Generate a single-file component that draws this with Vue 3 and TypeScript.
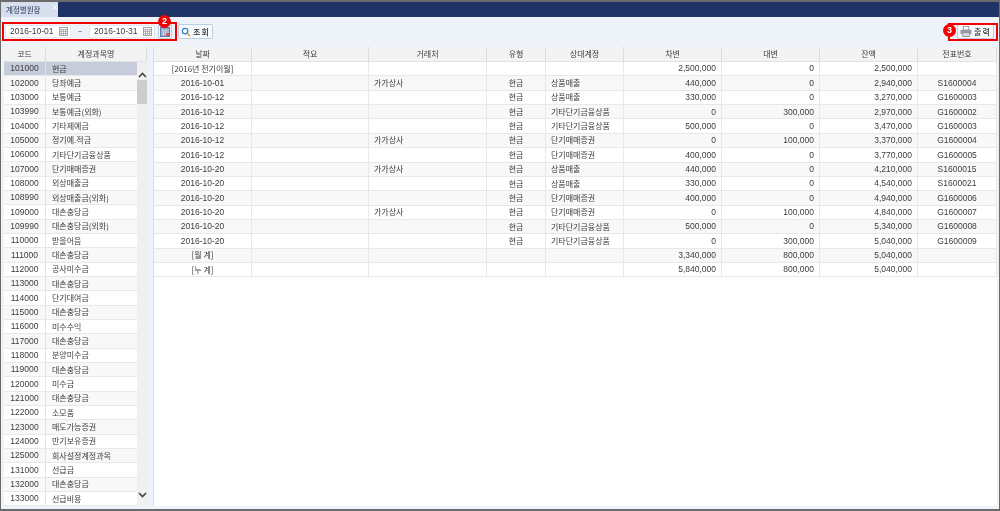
<script setup lang="ts">
const accounts: [string, string][] = [
  ['101000','현금'],['102000','당좌예금'],['103000','보통예금'],['103990','보통예금(외화)'],['104000','기타제예금'],
  ['105000','정기예.적금'],['106000','기타단기금융상품'],['107000','단기매매증권'],['108000','외상매출금'],['108990','외상매출금(외화)'],
  ['109000','대손충당금'],['109990','대손충당금(외화)'],['110000','받을어음'],['111000','대손충당금'],['112000','공사미수금'],
  ['113000','대손충당금'],['114000','단기대여금'],['115000','대손충당금'],['116000','미수수익'],['117000','대손충당금'],
  ['118000','분양미수금'],['119000','대손충당금'],['120000','미수금'],['121000','대손충당금'],['122000','소모품'],
  ['123000','매도가능증권'],['124000','만기보유증권'],['125000','회사설정계정과목'],['131000','선급금'],['132000','대손충당금'],['133000','선급비용'],
]
const heads = ['날짜','적요','거래처','유형','상대계정','차변','대변','잔액','전표번호']
const rows: string[][] = [
  ['[2016년 전기이월]','','','','','2,500,000','0','2,500,000',''],
  ['2016-10-01','','가가상사','현금','상품매출','440,000','0','2,940,000','S1600004'],
  ['2016-10-12','','','현금','상품매출','330,000','0','3,270,000','G1600003'],
  ['2016-10-12','','','현금','기타단기금융상품','0','300,000','2,970,000','G1600002'],
  ['2016-10-12','','','현금','기타단기금융상품','500,000','0','3,470,000','G1600003'],
  ['2016-10-12','','가가상사','현금','단기매매증권','0','100,000','3,370,000','G1600004'],
  ['2016-10-12','','','현금','단기매매증권','400,000','0','3,770,000','G1600005'],
  ['2016-10-20','','가가상사','현금','상품매출','440,000','0','4,210,000','S1600015'],
  ['2016-10-20','','','현금','상품매출','330,000','0','4,540,000','S1600021'],
  ['2016-10-20','','','현금','단기매매증권','400,000','0','4,940,000','G1600006'],
  ['2016-10-20','','가가상사','현금','단기매매증권','0','100,000','4,840,000','G1600007'],
  ['2016-10-20','','','현금','기타단기금융상품','500,000','0','5,340,000','G1600008'],
  ['2016-10-20','','','현금','기타단기금융상품','0','300,000','5,040,000','G1600009'],
  ['[월 계]','','','','','3,340,000','800,000','5,040,000',''],
  ['[누 계]','','','','','5,840,000','800,000','5,040,000',''],
]
const align = ['c','l','l','c','l','r','r','r','c']
const isNum = (s: string): boolean => /^[A-Z]?[\d,-]+$/.test(s)
</script>

<template>
  <div class="app">
    <div class="tabbar">
      <div class="tab"><span>계정별원장</span><i>×</i></div>
    </div>
    <div class="toolbar">
      <div class="date-group">
        <div class="input"><span>2016-10-01</span>
          <svg class="cal" viewBox="0 0 9 9"><rect x=".5" y=".5" width="8" height="8" fill="#fff" stroke="#a3a3a3"/><path d="M0 2.5h9M0 4.5h9M0 6.5h9M2.5 2v7M4.5 2v7M6.5 2v7" stroke="#a3a3a3" stroke-width=".8"/></svg>
        </div>
        <span class="tilde">~</span>
        <div class="input"><span>2016-10-31</span>
          <svg class="cal" viewBox="0 0 9 9"><rect x=".5" y=".5" width="8" height="8" fill="#fff" stroke="#a3a3a3"/><path d="M0 2.5h9M0 4.5h9M0 6.5h9M2.5 2v7M4.5 2v7M6.5 2v7" stroke="#a3a3a3" stroke-width=".8"/></svg>
        </div>
        <button class="btn cal-btn">
          <svg width="10" height="10" viewBox="0 0 10 10"><rect x=".5" y=".5" width="9" height="9" fill="#8fa4c8" stroke="#5c76a8"/><path d="M1 3h8M1 5h8M1 7h8M3.5 3v6M6 3v6" stroke="#dfe6f2" stroke-width=".6"/><rect x="6" y="6" width="3" height="3" fill="#d0605a"/></svg>
        </button>
      </div>
      <button class="btn search">
        <svg width="10" height="10" viewBox="0 0 11 11"><circle cx="4.5" cy="4.5" r="3" fill="#fff" stroke="#2f86c8" stroke-width="1.4"/><path d="M6.8 6.8L10 10" stroke="#c9963c" stroke-width="1.6"/></svg>
        <span>조 회</span>
      </button>
      <div class="spacer"></div>
      <button class="btn print">
        <svg width="12" height="11" viewBox="0 0 13 12"><rect x="3.5" y=".5" width="6" height="4" fill="#fff" stroke="#9a9a9a"/><rect x=".5" y="4" width="12" height="5" rx="1" fill="#9a9aa6"/><rect x="3" y="7.5" width="7" height="4" fill="#fff" stroke="#8a8a9a"/><path d="M4 9h5M4 10.5h5" stroke="#b99ac4" stroke-width=".6"/></svg>
        <span>출 력</span>
      </button>
    </div>
    <div class="content">
      <section class="left">
        <div class="lhead"><div>코드</div><div>계정과목명</div></div>
        <div class="lbody">
          <div class="lrows">
            <div v-for="(a, i) in accounts" :key="a[0]" class="lrow" :class="{ sel: i === 0, alt: i % 2 === 1 }">
              <div class="code">{{ a[0] }}</div><div class="name">{{ a[1] }}</div>
            </div>
          </div>
          <div class="scroll">
            <svg class="arrow" viewBox="0 0 9 6"><path d="M1 5l3.5-3.5L8 5" fill="none" stroke="#444" stroke-width="1.6"/></svg>
            <div class="thumb"></div>
            <div class="grow"></div>
            <svg class="arrow" viewBox="0 0 9 6"><path d="M1 1l3.5 3.5L8 1" fill="none" stroke="#444" stroke-width="1.6"/></svg>
          </div>
        </div>
      </section>
      <section class="right">
        <div class="rrow rhead"><div v-for="h in heads" :key="h">{{ h }}</div></div>
        <div v-for="(r, i) in rows" :key="i" class="rrow" :class="{ alt: i % 2 === 1 }">
          <div v-for="(c, j) in r" :key="j" :class="[align[j], { num: isNum(c) }]">{{ c }}</div>
        </div>
      </section>
    </div>

    <div class="mark m1"></div>
    <div class="mark m2"></div>
    <div class="badge b2">2</div>
    <div class="badge b3">3</div>
  </div>
</template>

<style>
html, body { margin: 0; background: #fff; }
</style>

<style scoped>
.app {
  position: relative; width: 1000px; height: 511px; box-sizing: border-box; overflow: hidden;
  display: flex; flex-direction: column; background: #eef2f9;
  border: 2px solid #6b6b6b; border-width: 2px 1px 2px 1px;
  font-family: "Noto Sans CJK KR", "Liberation Sans", sans-serif; font-size: 8px; color: #3c3c3c; line-height: 1;
  filter: blur(.3px);
}
.tabbar { height: 15px; background: #1f3367; display: flex; flex: none; }
.tab { width: 57px; background: #d6dfee; color: #44536e; display: flex; align-items: center; padding-left: 5px; box-sizing: border-box; position: relative; font-size: 7.5px; font-weight: 500; }
.tab i { position: absolute; left: 50px; top: 1px; font-style: normal; font-size: 8px; color: #fff; }
.toolbar { height: 29px; flex: none; display: flex; align-items: center; padding: 0 5px 0 4px; box-sizing: border-box; }
.date-group { display: flex; align-items: center; }
.input { width: 66px; height: 13px; background: #fff; border: 1px solid #e3e6ec; box-sizing: border-box; display: flex; align-items: center; justify-content: space-between; padding: 0 2px 0 4px; font-family: "Liberation Sans Narrow", "Liberation Sans", sans-serif; font-size: 8.5px; }
.cal { width: 9px; height: 9px; }
.tilde { width: 18px; text-align: center; font-family: "Liberation Sans", sans-serif; font-size: 7px; }
.btn { background: #f7fafd; border: 1px solid #b9cfe4; border-radius: 2px; height: 15px; box-sizing: border-box; padding: 0; display: flex; align-items: center; gap: 2px; font: inherit; font-weight: 500; color: #333; letter-spacing: -.3px; }
.cal-btn { width: 14px; margin-left: 3px; justify-content: center; }
.search { width: 35px; margin-left: 6px; padding-left: 2px; }
.print { width: 37px; padding-left: 2px; gap: 2px; }
.spacer { flex: 1; }
.content { flex: 1; min-height: 0; display: flex; padding: 1px 2px 3px 3px; gap: 6px; }
.left { width: 143px; flex: none; display: flex; flex-direction: column; background: #fff; overflow: hidden; }
.lhead { display: flex; height: 15px; flex: none; background: #f3f3f3; border-bottom: 1px solid #e2e2e2; box-sizing: border-box; }
.lhead > div { display: flex; align-items: center; justify-content: center; border-right: 1px solid #dcdcdc; box-sizing: border-box; }
.lhead > div:first-child { width: 42px; }
.lhead > div:last-child { flex: 1; }
.lbody { flex: 1; min-height: 0; display: flex; }
.lrows { flex: 1; min-width: 0; overflow: hidden; }
.lrow { display: flex; height: 14.33px; align-items: center; border-bottom: 1px solid #e8e8e8; box-sizing: border-box; }
.lrow.alt { background: #f8f8f8; }
.lrow.sel { background: #c6ccd9; }
.code { width: 42px; flex: none; text-align: center; height: 100%; display: flex; align-items: center; justify-content: center; border-right: 1px solid #e4e4e4; box-sizing: border-box; font-family: "Liberation Sans Narrow", "Liberation Sans", sans-serif; font-size: 8.5px; }
.name { padding-left: 6px; white-space: nowrap; }
.scroll { width: 10px; flex: none; background: #f0f0f0; display: flex; flex-direction: column; align-items: center; padding: 10px 0 8px; box-sizing: border-box; }
.arrow { width: 9px; height: 6px; flex: none; }
.thumb { width: 100%; height: 24px; flex: none; background: #cdcdcd; margin-top: 2px; }
.grow { flex: 1; }
.right { flex: 1; min-width: 0; background: #fff; border-left: 1px solid #d5deeb; }
.rrow { display: grid; grid-template-columns: 98px 117px 118px 59px 78px 98px 98px 98px 79px; height: 14.36px; border-bottom: 1px solid #e8e8e8; box-sizing: border-box; }
.rrow > div { display: flex; align-items: center; border-right: 1px solid #e8e8e8; box-sizing: border-box; padding: 0 5px; white-space: nowrap; }
.rrow > div.num { font-family: "Liberation Sans Narrow", "Liberation Sans", sans-serif; font-size: 8.5px; }
.rrow.alt { background: #f8f8f8; }
.rhead { height: 15px; background: #f3f3f3; border-bottom: 1px solid #e2e2e2; }
.rhead > div { justify-content: center; border-right-color: #dcdcdc; }
.c { justify-content: center; }
.l { justify-content: flex-start; }
.r { justify-content: flex-end; }
.mark { position: absolute; border: 2px solid #f00000; box-sizing: border-box; }
.m1 { left: 1px; top: 20px; width: 175px; height: 19px; }
.m2 { left: 947px; top: 21px; width: 50px; height: 18px; }
.badge { position: absolute; width: 13px; height: 13px; border-radius: 50%; background: #f00000; color: #fff; font: bold 9px/13px "Liberation Sans", sans-serif; text-align: center; }
.b2 { left: 157px; top: 13px; }
.b3 { left: 942px; top: 22px; }
</style>
